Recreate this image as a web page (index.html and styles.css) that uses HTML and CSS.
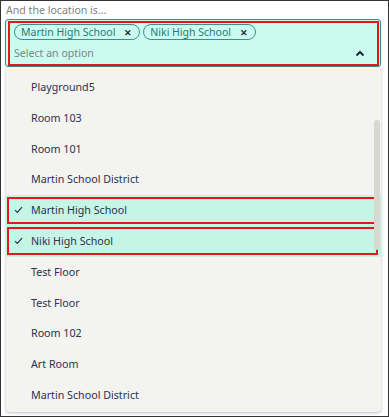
FILE: index.html
```html
<!DOCTYPE html>
<html>
<head lang="en">
    <meta charset="UTF-8">
    <title>Location</title>
    <link rel="stylesheet" href="styles.css">
</head>
<body>
    <div id="frame">
        <div class="label">And the location is...</div>
        <div class="select">
            <div class="select-inner">
                <div class="chips">
                    <span class="chip">Martin High School <b>&#x2715;</b></span>
                    <span class="chip">Niki High School <b>&#x2715;</b></span>
                </div>
                <div class="search">
                    <span>Select an option</span>
                    <svg class="caret" width="10" height="7" viewBox="0 0 10 7"><path d="M1.5 5.5 L5 2 L8.5 5.5" fill="none" stroke="#1e2340" stroke-width="2"/></svg>
                </div>
            </div>
        </div>
        <div class="panel">
            <ul class="options">
                <li>Playground5</li>
                <li>Room 103</li>
                <li>Room 101</li>
                <li>Martin School District</li>
                <li class="selected"><div class="box"><svg class="check" width="9" height="8" viewBox="0 0 9 8"><path d="M1 4.2 L3.3 6.5 L8 1.2" fill="none" stroke="#2e3150" stroke-width="1.2"/></svg>Martin High School</div></li>
                <li class="selected"><div class="box"><svg class="check" width="9" height="8" viewBox="0 0 9 8"><path d="M1 4.2 L3.3 6.5 L8 1.2" fill="none" stroke="#2e3150" stroke-width="1.2"/></svg>Niki High School</div></li>
                <li>Test Floor</li>
                <li>Test Floor</li>
                <li>Room 102</li>
                <li>Art Room</li>
                <li>Martin School District</li>
            </ul>
            <div class="thumb"></div>
        </div>
    </div>
</body>
</html>
```

FILE: styles.css
```css
*{
    padding: 0;
    margin: 0;
    box-sizing: border-box;
}
ul{
    list-style: none;
}
body{
    font-family: "Noto Sans", sans-serif;
    background: #fff;
}
#frame{
    width: 389px;
    height: 417px;
    border: 1px solid #333;
    overflow: hidden;
}
.label{
    height: 18px;
    padding: 2px 0 0 5px;
    font-size: 10.6px;
    line-height: 14px;
    color: #7f7f7f;
}
.select{
    margin: 0 7px 0 4px;
    border: 1px solid #3d8a8a;
    border-radius: 3px;
    background: #ccfcef;
}
.select-inner{
    margin: 1px 1px 0 2px;
    border: 2px solid #e8151b;
    height: 45px;
    padding: 1px 0 0 4px;
}
.chips{
    display: flex;
    gap: 3px;
}
.chip{
    display: flex;
    align-items: center;
    height: 16px;
    padding: 0 7px 0 6px;
    border: 1px solid #3a9090;
    border-radius: 8px;
    font-size: 10.5px;
    color: #237b7b;
}
.chip b{
    margin-left: 9px;
    font-size: 8.5px;
    color: #1e2a44;
}
.search{
    display: flex;
    justify-content: space-between;
    align-items: center;
    height: 24px;
    padding: 2px 12px 0 0;
    font-size: 10.6px;
    color: #7a8484;
}
.caret{
    margin-top: 1px;
}
.panel{
    position: relative;
    height: 345px;
    margin: 0 7px 0 5px;
    padding-top: 5px;
    background: #f3f3ef;
    border-radius: 0 0 4px 4px;
    box-shadow: 0 1px 3px rgba(60, 60, 90, 0.35);
    overflow: hidden;
}
.options li{
    height: 30.8px;
    line-height: 30.8px;
    padding-left: 25px;
    font-size: 10.7px;
    color: #2e3150;
}
.options .selected{
    padding: 1.5px 3px 0 1px;
    background: #c5f5e5;
    line-height: 23px;
}
.options .box{
    display: flex;
    align-items: center;
    height: 27.5px;
    border: 2px solid #e8151b;
    padding-left: 5px;
}
.check{
    margin-right: 8px;
}
.thumb{
    position: absolute;
    top: 53px;
    right: 1px;
    width: 6px;
    height: 130px;
    border-radius: 3px;
    background: #d8d8d0;
}
```
